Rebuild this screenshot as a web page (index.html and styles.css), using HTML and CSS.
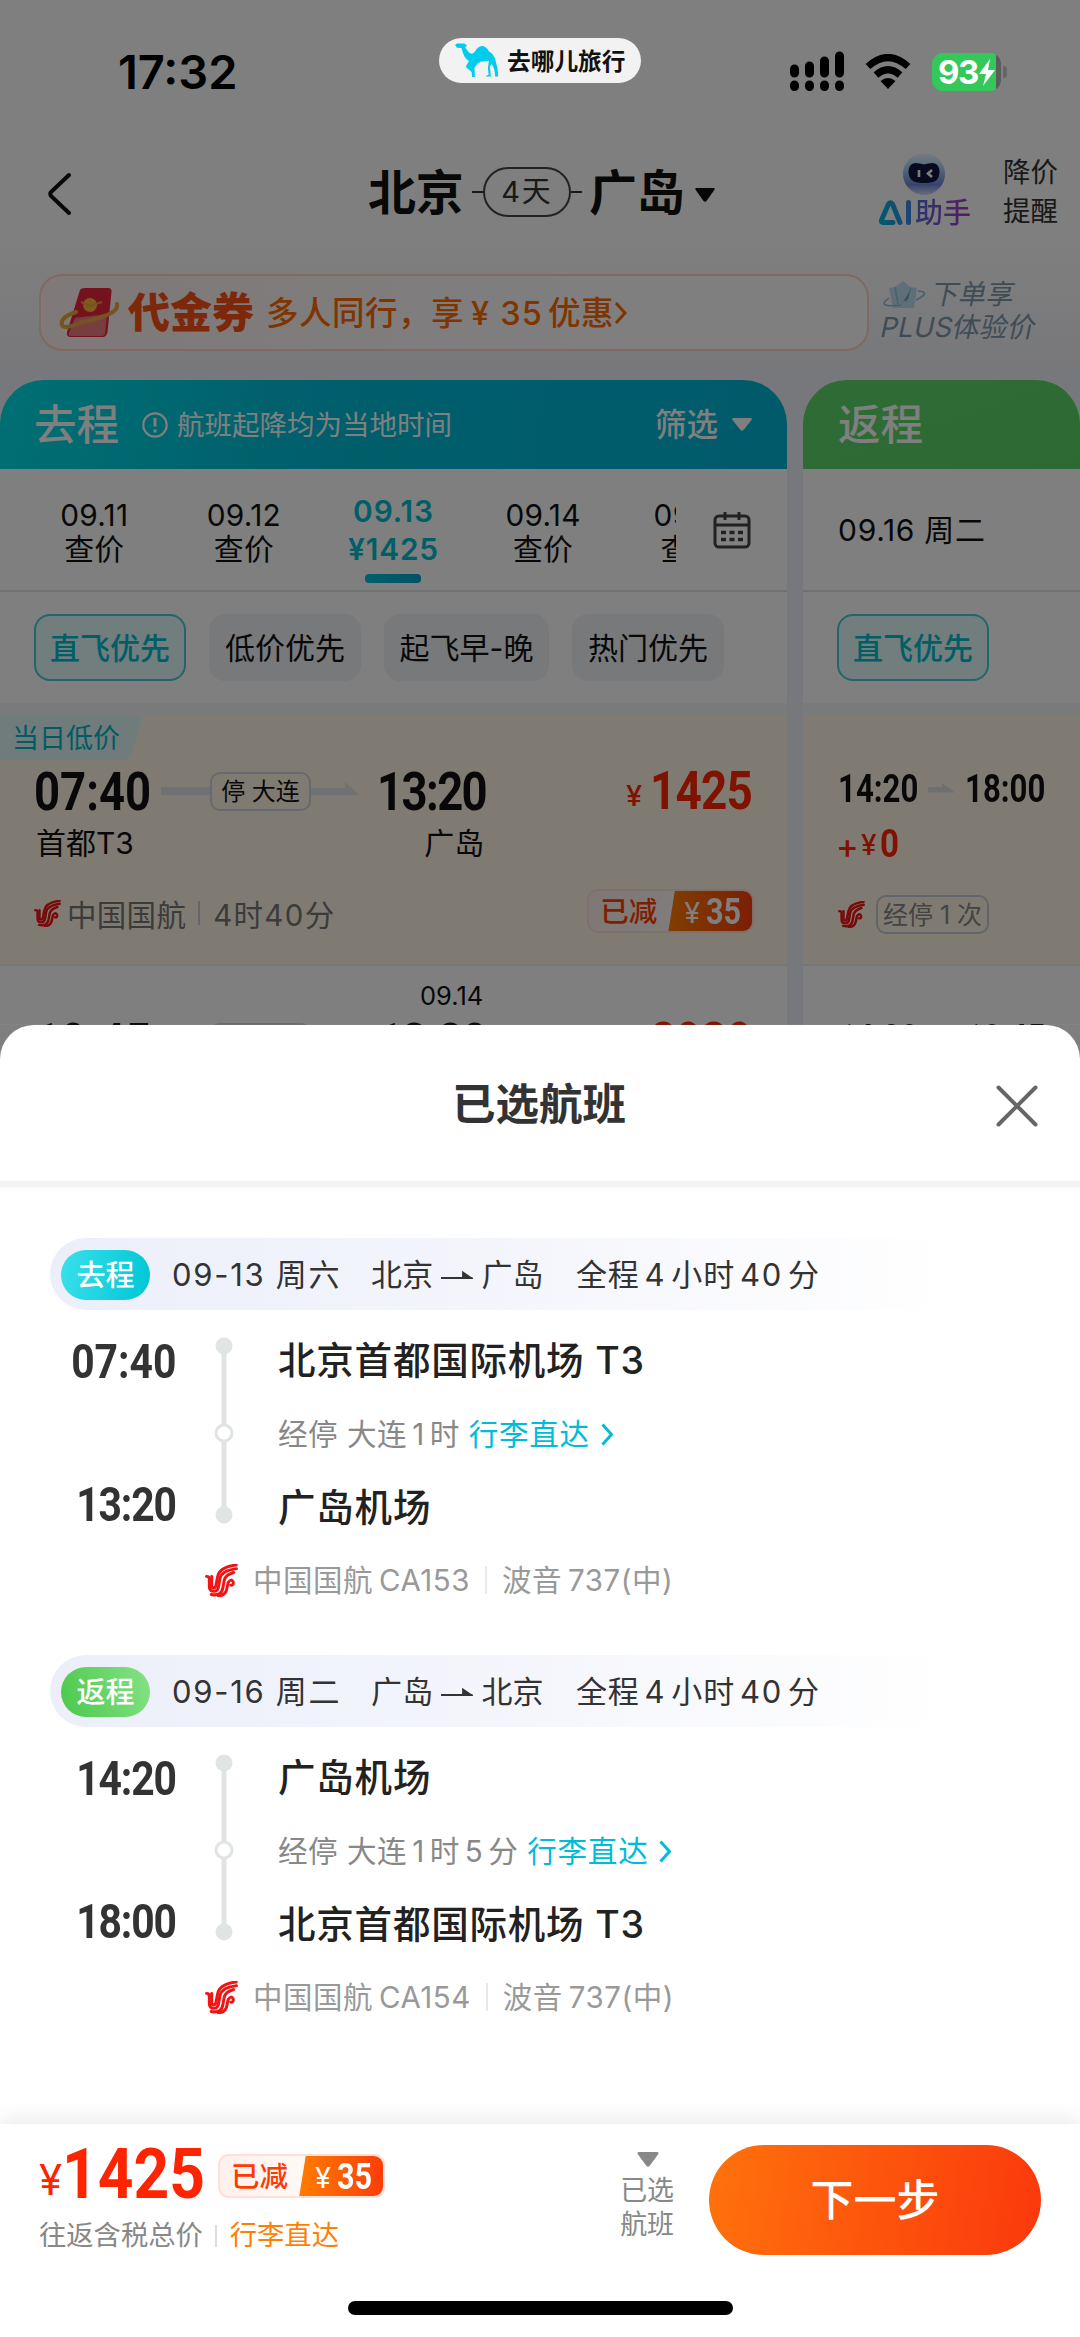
FILE: index.html
```html
<!DOCTYPE html>
<html lang="zh-CN">
<head>
<meta charset="utf-8">
<title>已选航班</title>
<link rel="stylesheet" href="styles.css">
</head>
<body>
<svg class="defs" width="0" height="0">
  <defs>
    <symbol id="airline" viewBox="0 0 32 32">
      <g fill="none" stroke-width="2.900" stroke-linecap="round">
        <path d="M1.500 12q3 0 2.700 3.500v6q0 5 4.500 5q3.800 0 4.500-5l1.300-7.500q1.600-7.500 16-9.500"/>
        <path d="M6.500 12v9q0 2 2 2.200q1.800 0 2.200-3l1.600-8q2-9.500 18-11.200"/>
        <path d="M6 29.500q9 2 11-5l1.700-9q1.500-5 9-7.200"/>
        <path d="M13 31q7-.6 8.200-7l1.200-6q3-4.500 5-.500q.4 3.500-2.400 3"/>
      </g>
    </symbol>
    <symbol id="camel" viewBox="0 0 44 34">
      <path d="M0 2L2 .5h7l3 1.800-1.800 2.200L14 9.500q3 2.500 5.500-.5q3.500-5.800 7.500-6q4 0 7 5.500q5 2.500 6.500 9q2.500 7 2.800 16h-3.200q0-8-3.600-13l-1.600 3.500 1 9.500h-5q0-1.300 2.800-1.700l-.8-6.500 1-7.500-8.500 1-3 2-3 4 .6 10.700h-5q0-1.200 2.200-1.500l-.6-5-5.200-4.600q-.7-1 0-2l2.600-4.500Q9 16 6.500 5L2 4.800z" fill="#00cdee"/>
    </symbol>
  </defs>
</svg>
<div class="screen">
  <div class="app">
    <header class="nav">
      <svg class="back" width="24" height="44" viewBox="0 0 24 44"><path d="M21 3L3 20q-1.500 2 0 4l18 17" fill="none" stroke="#111" stroke-width="4" stroke-linecap="round"/></svg>
      <div class="trip">
        <b>北京</b><i></i><span class="days">4天</span><i></i><b>广岛</b>
        <svg width="20" height="14" viewBox="0 0 20 14"><path d="M1.500 0h17q2 0 .8 2l-7.800 11q-1.500 1.500-3 0L.7 2Q-.5 0 1.500 0z" fill="#111"/></svg>
      </div>
      <div class="ai">
        <svg width="44" height="44" viewBox="0 0 44 44">
          <defs><linearGradient id="orb" x1="0" y1="0" x2="0" y2="1"><stop offset="0" stop-color="#f3f8ff"/><stop offset=".35" stop-color="#a9d2f5"/><stop offset=".75" stop-color="#6f87d8"/><stop offset="1" stop-color="#d5dcf8"/></linearGradient></defs>
          <circle cx="22" cy="22" r="21" fill="url(#orb)"/>
          <path d="M13 11q5 0 9 1.500q4-1.500 9-1.500q7 1 6.500 10q-1 9-9 9.500q-6 1-13 0q-8-1-9-9.500q-.5-9 6.500-10z" fill="#10173e"/>
          <path d="M17 18v7M30 18l-4 3.500 4 3.500" fill="none" stroke="#fff" stroke-width="2.600"/>
        </svg>
        <div class="ai-label">
          <svg width="33" height="26" viewBox="0 0 33 26"><defs><linearGradient id="aig" gradientUnits="userSpaceOnUse" x1="0" y1="0" x2="33" y2="0"><stop offset="0" stop-color="#00b5dc"/><stop offset="1" stop-color="#3f87e8"/></linearGradient></defs><path d="M14 22.500H3.500Q2 22 2.500 20L9.500 4q2-2.500 4 0l7.500 18.500M29.500 2.500v20" fill="none" stroke="url(#aig)" stroke-width="5" stroke-linecap="round"/></svg><span>助手</span>
        </div>
      </div>
      <div class="alert">降价<br>提醒</div>
    </header>

    <section class="promo">
      <div class="coupon">
        <svg width="64" height="50" viewBox="0 0 64 50"><path d="M22 2q1-2 5-2h23q4 0 3.500 4l-4 40q-1 5-5 5H13q-5 0-4-5z" fill="#e8243d"/><path d="M17 30l32-4-2 20q-1 2-3 2H13q-3 0-2-3z" fill="#ef7b83"/><path d="M18 24Q2 29 4 37q2 5 20-3 19-3 31-10 5-4 4-8" fill="none" stroke="#eba83e" stroke-width="4" stroke-linecap="round"/><circle cx="32" cy="17" r="7" fill="#f7b93d"/><path d="M23 14l9 4 12-4" fill="none" stroke="#f2a03a" stroke-width="2"/></svg>
        <b>代金券</b><span>多人同行，享<em>¥ 35</em>优惠</span>
        <svg width="13" height="24" viewBox="0 0 13 24"><path d="M2 2l9 10-9 10" fill="none" stroke="#ff6a00" stroke-width="3"/></svg>
      </div>
      <div class="plus">
        <div><svg width="46" height="30" viewBox="0 0 46 30"><path d="M8 8l6-1 8-6 7 6 7 1-3 20H12z" fill="#c0dfef"/><path d="M14 7l3 17M30 8l-5 14" fill="none" stroke="#8fc4e2" stroke-width="1.500"/><path d="M29 11l-7 11 5-3z" fill="#5ea3cf"/><path d="M8 18q-14 10 12 7M37 11q14 1-2 9" fill="none" stroke="#85bde0" stroke-width="1.500"/></svg><span>下单享</span></div>
        <div class="plus-second">PLUS体验价</div>
      </div>
    </section>

    <main class="columns">
      <section class="outbound">
        <div class="col-head">
          <strong>去程</strong>
          <svg width="26" height="26" viewBox="0 0 26 26"><circle cx="13" cy="13" r="11.700" fill="none" stroke="#fff" stroke-width="2.200"/><path d="M13 6v8.500M13 17.500v3" stroke="#fff" stroke-width="3"/></svg>
          <span class="note">航班起降均为当地时间</span>
          <span class="filter">筛选</span>
          <svg width="20" height="13" viewBox="0 0 20 13"><path d="M1.500 0h17q2 0 1 2l-8 10q-1.500 1.500-3 0l-8-10Q-.5 0 1.500 0z" fill="#fff"/></svg>
        </div>
        <div class="dates">
          <div class="days-strip">
            <div class="day">09.11<br>查价</div>
            <div class="day">09.12<br>查价</div>
            <div class="day on">09.13<br><span>¥1425</span><i></i></div>
            <div class="day">09.14<br>查价</div>
            <div class="day">09.15<br>查价</div>
          </div>
          <svg width="38" height="38" viewBox="0 0 38 38"><g fill="none" stroke="#444" stroke-width="3"><rect x="2" y="5" width="34" height="31" rx="4"/><path d="M2 14h34M12 1v8M26 1v8"/><path d="M8 21.500h22M8 28.500h22" stroke-dasharray="5 3.500" stroke-width="3.500"/></g></svg>
        </div>
        <div class="chips"><span class="chip on">直飞优先</span><span class="chip">低价优先</span><span class="chip wide">起飞早-晚</span><span class="chip">热门优先</span></div>
        <article class="flight">
          <div class="tag"><span>当日低价</span></div>
          <div class="times">
            <div class="slot"><b class="din">07:40</b></div>
            <div class="leg"><i class="bar"></i><span>停 大连</span><svg width="48" height="14" viewBox="0 0 48 14"><path d="M0 6h34V0l14 13H0z" fill="#dfe3e4"/></svg></div>
            <div class="slot second"><b class="din">13:20</b></div>
            <div class="price"><small>¥</small><b class="din">1425</b></div>
          </div>
          <div class="places"><span>首都T3</span><span>广岛</span></div>
          <div class="carrier">
            <svg class="air" width="27" height="27"><use href="#airline"/></svg><span>中国国航</span><i></i><span class="duration">4时40分</span>
            <div class="save"><span>已减</span><b><small>¥</small><em class="din">35</em></b></div>
          </div>
        </article>
        <article class="flight next">
          <div class="arrival-date">09.14</div>
          <div class="times">
            <div class="slot"><b class="din">10:45</b></div>
            <div class="leg"><i class="bar"></i><span>停 大连</span><svg width="48" height="14" viewBox="0 0 48 14"><path d="M0 6h34V0l14 13H0z" fill="#dfe3e4"/></svg></div>
            <div class="slot second"><b class="din">13:20</b></div>
            <div class="price"><small>¥</small><b class="din">2939</b></div>
          </div>
        </article>
      </section>

      <section class="inbound">
        <div class="col-head"><strong>返程</strong></div>
        <div class="dates">09.16 周二</div>
        <div class="chips"><span class="chip on">直飞优先</span></div>
        <article class="flight">
          <div class="in-times"><span><b class="din">14:20</b></span><svg width="27" height="10" viewBox="0 0 27 10"><path d="M0 4h14V0l13 9.500H0z" fill="#dadfe0"/></svg><span><b class="din">18:00</b></span></div>
          <div class="extra"><span>+</span><small>¥</small><b class="din">0</b></div>
          <div class="in-carrier"><svg class="air" width="27" height="27"><use href="#airline"/></svg><span>经停 1 次</span></div>
        </article>
        <article class="flight next">
          <div class="in-times"><span><b class="din">14:20</b></span><svg width="27" height="10"></svg><span><b class="din">10:45</b></span></div>
        </article>
      </section>
    </main>
  </div>
  <div class="mask"></div>

  <div class="status">
    <div class="clock">17:32</div>
    <div class="return-pill"><svg width="44" height="34"><use href="#camel"/></svg><span>去哪儿旅行</span></div>
    <svg class="signal" width="54" height="40" viewBox="0 0 54 40"><path d="M4.500 18v4M19.500 15v7M34.500 10v12M49.500 5v17M4.500 34v1.500M19.500 34v1.500M34.500 34v1.500M49.500 34v1.500" stroke="#000" stroke-width="9" stroke-linecap="round"/></svg>
    <svg class="wifi" width="46" height="35" viewBox="0 0 46 35"><path d="M3 12.500q20-18 40 0M11 21q12-10.500 24 0" fill="none" stroke="#000" stroke-width="7"/><path d="M23 35l-7.500-8q7.500-6 15 0z"/></svg>
    <div class="battery"><div class="cell">93<svg width="18" height="27" viewBox="0 0 18 27"><path d="M12 0L1 15h7L5 27 17 11h-7z" fill="#fff"/></svg></div><i></i></div>
  </div>

  <section class="sheet">
    <div class="sheet-title"><h1>已选航班</h1><svg width="42" height="42" viewBox="0 0 42 42"><path d="M2.500 2.500l37 37M39.500 2.500l-37 37" stroke="#666" stroke-width="4" stroke-linecap="round"/></svg></div>
    <div class="journeys">
      <article class="journey">
        <div class="summary"><b class="badge go">去程</b><span class="date">09-13 周六</span><span class="cities">北京<svg width="32" height="10" viewBox="0 0 32 10"><path d="M0 8h31.500M22 2.500l8 5.500h-8z" stroke="#333" stroke-width="1.800" fill="#333"/></svg>广岛</span><span class="total">全程<em>4</em>小时<em>40</em>分</span></div>
        <div class="detail">
          <div class="clock-col"><span><b class="din">07:40</b></span><span class="tight-one"><b class="din">13:20</b></span></div>
          <svg class="line" width="20" height="188" viewBox="0 0 20 188"><path d="M10 9v170" stroke="#e0e4e5" stroke-width="5"/><g fill="#e0e4e5"><circle cx="10" cy="9" r="8.500"/><circle cx="10" cy="178" r="8.500"/></g><circle cx="10" cy="96" r="8" fill="#fff" stroke="#e0e4e5" stroke-width="3"/></svg>
          <div class="stops"><b>北京首都国际机场 T3</b><p>经停 大连<em>1</em>时 <a>行李直达<svg width="12" height="23" viewBox="0 0 12 23"><path d="M1.500 1.500l9 10-9 10" fill="none" stroke="#00bcd8" stroke-width="3"/></svg></a></p><b>广岛机场</b></div>
        </div>
        <div class="plane"><svg class="air" width="33" height="33"><use href="#airline"/></svg><span>中国国航<em>CA153</em></span><i></i><span>波音<em>737(</em>中<em class="tight">)</em></span></div>
      </article>
      <article class="journey">
        <div class="summary"><b class="badge home">返程</b><span class="date">09-16 周二</span><span class="cities">广岛<svg width="32" height="10" viewBox="0 0 32 10"><path d="M0 8h31.500M22 2.500l8 5.500h-8z" stroke="#333" stroke-width="1.800" fill="#333"/></svg>北京</span><span class="total">全程<em>4</em>小时<em>40</em>分</span></div>
        <div class="detail">
          <div class="clock-col"><span class="tight-one"><b class="din">14:20</b></span><span class="tight-one"><b class="din">18:00</b></span></div>
          <svg class="line" width="20" height="188" viewBox="0 0 20 188"><path d="M10 9v170" stroke="#e0e4e5" stroke-width="5"/><g fill="#e0e4e5"><circle cx="10" cy="9" r="8.500"/><circle cx="10" cy="178" r="8.500"/></g><circle cx="10" cy="96" r="8" fill="#fff" stroke="#e0e4e5" stroke-width="3"/></svg>
          <div class="stops"><b>广岛机场</b><p>经停 大连<em>1</em>时<em>5</em>分 <a>行李直达<svg width="12" height="23" viewBox="0 0 12 23"><path d="M1.500 1.500l9 10-9 10" fill="none" stroke="#00bcd8" stroke-width="3"/></svg></a></p><b>北京首都国际机场 T3</b></div>
        </div>
        <div class="plane"><svg class="air" width="33" height="33"><use href="#airline"/></svg><span>中国国航<em>CA154</em></span><i></i><span>波音<em>737(</em>中<em class="tight">)</em></span></div>
      </article>
    </div>
    <footer class="footer">
      <div class="pay">
        <div class="sum">
          <div class="pay-sum">
            <div class="amount"><small>¥</small><b class="din">1425</b></div>
            <div class="save"><span>已减</span><b><small>¥</small><em class="din">35</em></b></div>
          </div>
          <div class="terms">往返含税总价<i></i><span>行李直达</span></div>
        </div>
        <div class="picked"><svg width="22" height="15" viewBox="0 0 22 15"><path d="M2 0h18q2.500 0 1 2.500L12.500 14q-1.500 1.500-3 0L1 2.500Q-.5 0 2 0z" fill="#888"/></svg>已选<br>航班</div>
        <button>下一步</button>
      </div>
      <div class="home-bar"></div>
    </footer>
  </section>
</div>
</body>
</html>
```
FILE: styles.css
```css
* { box-sizing: border-box; }
body { margin: 0; font-family: Inter, "Noto Sans CJK SC", sans-serif; color: #111; }
svg { display: block; flex: none; }
em { font-style: normal; }
h1, p { margin: 0; }
.defs { position: absolute; }
.screen { position: relative; width: 1080px; height: 2337px; overflow: hidden; display: flex; flex-direction: column; white-space: nowrap; background: #fff; }
.din { display: inline-block; font-family: Roboto, "Liberation Sans", sans-serif; font-weight: 700; transform: scaleX(.85); transform-origin: 0 50%; }
.air { stroke: #f01414; }

/* search results page */
.app { height: 1025px; flex: none; padding-top: 142px; background: linear-gradient(#fff 240px, #eff0f6 370px); }
.nav { height: 100px; display: grid; grid-template-columns: 319px 512px 112px auto; padding-left: 48px; align-items: center; }
.back { margin-top: 4px; }
.trip { display: flex; align-items: center; height: 50px; }
.trip b { font-size: 48px; line-height: 50px; width: 96px; letter-spacing: -.2px; padding-left: 1px; margin-top: 1px; }
.trip i { width: 11px; height: 2px; background: #333; }
.trip i:first-of-type { margin-left: 9px; }
.trip i:nth-of-type(2) { margin-right: 6px; }
.trip svg { margin: 6px 0 0 11px; }
.days { width: 88px; height: 50px; border: 2px solid #444; border-radius: 25px; font-size: 29px; line-height: 46px; text-align: center; color: #333; letter-spacing: 2px; }
.ai { height: 82px; }
.ai > svg { margin: 1px 0 -1px 23px; }
.ai-label { display: flex; align-items: center; height: 36px; font-size: 28px; line-height: 36px; font-weight: 500; gap: 3px; }
.ai-label span { background: linear-gradient(90deg, #5070dc, #b034cc); -webkit-background-clip: text; background-clip: text; color: transparent; }
.alert { font-size: 27.500px; line-height: 39px; color: #333; padding-left: 12px; }
.promo { display: flex; margin: 32px 0 0 39px; height: 77px; }
.coupon { width: 830px; border: 2px solid #ffd2c2; border-radius: 23px; background: linear-gradient(90deg, #fff2f2, #fff 70%); display: flex; align-items: center; padding-left: 17px; color: #ff6a00; }
.coupon b { font-size: 42px; line-height: 50px; margin: 1px 0 0 6px; color: #fa5014; width: 127px; font-weight: 900; }
.coupon span { font-size: 32.500px; line-height: 40px; letter-spacing: .5px; margin: 2px 0 0 11px; font-weight: 500; }
.coupon em { margin: 0 5px 0 7px; letter-spacing: 1.200px; }
.plus { padding: 4px 0 0 12px; font-size: 27.500px; line-height: 33px; color: #8098aa; }
.plus div { display: flex; align-items: center; }
.plus span { transform: skewX(-12deg); margin-left: 5px; }
.plus .plus-second { transform: skewX(-12deg); letter-spacing: .2px; }

.columns { display: flex; gap: 16px; margin-top: 29px; height: 645px; overflow: hidden; }
.outbound { width: 787px; background: #fff; border-radius: 44px 44px 0 0; overflow: hidden; flex: none; }
.inbound { width: 277px; background: #fff; border-radius: 44px 44px 0 0; overflow: hidden; }
.col-head { height: 89px; display: flex; align-items: center; padding-left: 34px; color: #fff; background: linear-gradient(100deg, #00dfe6, #00bed8 40%, #00b4d4); }
.col-head strong { font-size: 42.500px; font-weight: 500; width: 108px; line-height: 50px; }
.note { font-size: 27.500px; line-height: 36px; margin: 0 0 0 9px; width: 469px; }
.filter { font-size: 31.500px; line-height: 40px; font-weight: 500; margin: 0 0 0 9px; width: 77px; }
.inbound .col-head { background: linear-gradient(160deg, #60d86a, #5ad467); }
.inbound .col-head strong { padding-left: 1px; }
.dates { height: 123px; border-bottom: 2px solid #dfe2e8; display: flex; align-items: center; }
.days-strip { width: 676px; height: 121px; display: flex; padding-left: 19.500px; overflow: hidden; flex: none; }
.days-strip + svg { margin: 1px 0 0 37px; }
.day { width: 149.600px; flex: none; text-align: center; font-size: 29.800px; letter-spacing: .3px; line-height: 34px; padding-top: 29px; }
.day:last-child { padding-right: 4px; }
.day.on { color: #00bccd; font-weight: 600; padding-top: 23px; line-height: 38px; letter-spacing: .9px; }
.day i { display: block; width: 56px; height: 9px; border-radius: 4px; background: linear-gradient(90deg, #00c0d8, #00a4cd); margin: 6px auto 0; }
.inbound .dates { padding: 0 0 4px 35px; font-size: 30px; letter-spacing: .7px; }
.chips { height: 111px; display: flex; gap: 23px; padding: 22px 0 0 34px; }
.chip { width: 152px; height: 67px; border-radius: 16px; background: #f1f2f6; font-size: 30px; line-height: 69px; text-align: center; flex: none; }
.chip.wide { width: 165px; }
.chip.on { border: 2px solid #45cbd5; line-height: 65px; background: #e4fafb; color: #00bccd; font-weight: 500; }
.flight { height: 263px; border-top: 13px solid #f2f5f6; border-bottom: 2px solid #e9eaec; background: #fff7e6; }
.tag { width: 142px; height: 44px; background: #e0f8f9; clip-path: polygon(0 0, 100% 0, 94% 75%, 92% 90%, 88% 100%, 0 100%); font-size: 27px; line-height: 45px; color: #00b6c8; padding-left: 12px; }
.times { display: flex; align-items: center; height: 62px; padding-left: 34px; }
.slot { width: 127px; font-size: 53.500px; line-height: 62px; }
.leg { display: flex; align-items: center; width: 216px; }
.leg .bar { width: 49px; height: 8px; background: #dfe3e4; }
.leg span { width: 101px; height: 39px; border: 2px solid #ccd2de; border-radius: 10px; font-size: 24px; line-height: 35px; text-align: center; }
.leg svg { margin-top: -4px; }
.slot.second { width: 249px; letter-spacing: -1.900px; }
.price { color: #ff2400; display: flex; font-size: 54px; line-height: 62px; padding-top: 1px; }
.price small { font-size: 29px; width: 24px; padding-top: 9px; font-weight: 500; line-height: 54px; }
.price .din { letter-spacing: -1px; }
.places { display: flex; font-size: 30px; line-height: 40px; padding: 1px 0 0 36px; }
.places span { width: 388px; }
.places span + span { padding-left: 13px; }
.carrier { display: flex; align-items: center; height: 44px; margin-top: 28px; padding-left: 34px; color: #777; font-size: 29.500px; }
.carrier > span { margin-left: 6px; letter-spacing: .3px; }
.carrier > i { width: 2px; height: 24px; background: #ccc; margin-left: 12px; }
.carrier .duration { margin-left: 13px; letter-spacing: 1.300px; width: 374px; }
.carrier .save { margin-top: -5px; }
.save { width: 167px; height: 44px; display: flex; border: 2px solid #ffe0d8; border-radius: 11px; background: linear-gradient(90deg, #fff1ec, #fff); color: #ff3c00; font-size: 28.500px; line-height: 41px; font-weight: 500; overflow: hidden; flex: none; }
.save > span { width: 81px; padding-left: 11px; }
.save > b { width: 86px; margin: -2px; height: 44px; line-height: 47px; flex: none; color: #fff; background: linear-gradient(90deg, #ff7d00, #fa3c0a); clip-path: polygon(7px 0, 100% 0, 100% 100%, 0 100%); padding-left: 16px; display: flex; }
.save small { font-size: 29px; width: 22px; font-weight: 400; }
.save .din { font-size: 36px; }
.next { background: #fff; border-top: 0; }
.arrival-date { font-size: 25.500px; line-height: 30px; padding: 15px 0 0 420px; }
.next .times { margin-top: 0; }
.in-times { display: flex; align-items: center; padding-left: 35px; margin-top: 51px; height: 42px; font-size: 38px; line-height: 42px; }
.in-times .din { transform: scaleX(.82); }
.in-times span { width: 90px; }
.in-times svg { margin-right: 10px; }
.extra { display: flex; padding-left: 33px; margin-top: 14px; height: 42px; line-height: 45px; color: #ff2400; }
.extra span { font-size: 34px; width: 25px; font-weight: 500; }
.extra small { font-size: 28px; width: 19px; font-weight: 500; }
.extra .din { font-size: 39px; line-height: 43px; }
.in-carrier { display: flex; align-items: center; gap: 11px; padding-left: 35px; margin-top: 30px; }
.in-carrier span { width: 113px; height: 39px; border: 2px solid #c4cad6; border-radius: 10px; font-size: 25px; line-height: 36px; color: #888; text-align: center; }
.inbound .next .in-times { margin-top: 51px; }

.mask { position: absolute; inset: 0 0 auto 0; height: 1100px; background: rgba(0, 0, 0, .5); }

/* system status bar, shown over the mask */
.status { position: absolute; top: 38px; left: 118px; display: flex; height: 68px; }
.clock { font-size: 47px; line-height: 68px; font-weight: 600; width: 321px; color: #000; }
.return-pill { width: 202px; height: 45px; border-radius: 23px; background: #f2f2f2; display: flex; padding: 5px 0 0 16px; gap: 8px; font-size: 23.700px; line-height: 37px; font-weight: 700; color: #111; }
.signal { margin: 13px 0 0 149px; }
.wifi { margin: 16px 0 0 21px; }
.battery { display: flex; margin: 15px 0 0 21px; height: 38px; align-items: center; }
.cell { width: 69px; height: 38px; border-radius: 11px; background: linear-gradient(90deg, #34c759 64px, #5c5c5c 64px); color: #fff; font-size: 33px; font-weight: 700; line-height: 38px; display: flex; align-items: center; padding-left: 6px; letter-spacing: -1.500px; }
.battery i { width: 4px; height: 12px; margin-left: 2px; border-radius: 0 4px 4px 0; background: #666; }

/* selected flights sheet */
.sheet { position: relative; flex: 1; background: #fff; border-radius: 34px 34px 0 0; display: flex; flex-direction: column; }
.sheet-title { height: 162px; flex: none; display: grid; grid-template-columns: 1fr auto; align-items: center; border-bottom: 6px solid #f3f3f3; box-shadow: 0 3px 4px #fafafa; padding: 6px 42px 0 84px; }
.sheet-title h1 { font-size: 43.500px; line-height: 60px; font-weight: 700; text-align: center; color: #333; margin: -5px 2px 0 0; }
.journeys { flex: 1; padding: 51px 0 0 50px; }
.journey { height: 417px; }
.summary { height: 72px; width: 950px; border-radius: 36px 0 0 36px; background: linear-gradient(90deg, #eceffa, #f5f6fc 50%, #fff 95%); display: grid; grid-template-columns: 111px 199px 205px auto; padding: 1px 0 0 11px; align-items: center; font-size: 31px; line-height: 45px; color: #333; }
.badge { width: 89px; height: 50px; border-radius: 25px; color: #fff; font-size: 29px; font-weight: 500; line-height: 51px; text-align: center; }
.badge.go { background: linear-gradient(100deg, #3ae0ea, #00c6d6); }
.badge.home { background: linear-gradient(70deg, #4ac84c, #86e286); }
.date { letter-spacing: 1.700px; }
.cities { display: flex; align-items: center; gap: 8px; letter-spacing: .2px; }
.total { letter-spacing: .8px; }
.total em { margin: 0 5px; letter-spacing: 1.700px; }
.detail { display: grid; grid-template-columns: 164px 20px auto; height: 188px; margin-top: 27px; }
.clock-col { padding-right: 18px; width: 144px; padding-top: 1px; }
.clock-col span { display: flex; justify-content: flex-end; height: 50px; margin-top: -1px; font-size: 47.500px; line-height: 50px; color: #333; }
.clock-col span + span { margin-top: 93px; }
.clock-col .din { transform-origin: 100% 50%; transform: scaleX(.86); }
.clock-col .tight-one { letter-spacing: -1.300px; }
.stops { padding-left: 44px; display: grid; grid-template-rows: 48px 98px 49px; align-items: center; height: 195px; }
.stops b { font-size: 37.500px; line-height: 46px; font-weight: 500; letter-spacing: .8px; color: #222; }
.stops p { font-size: 29.600px; line-height: 40px; letter-spacing: .5px; color: #888; white-space: pre; }
.stops em { margin: 0 5px; }
.stops a { color: #00bcd8; letter-spacing: .7px; }
.stops a svg { display: inline-block; margin: 0 0 -1px 11px; }
.plane { display: flex; align-items: center; margin: 35px 0 0 155px; height: 40px; font-size: 29.500px; line-height: 41px; letter-spacing: .5px; color: #999; }
.plane span { margin-left: 15px; }
.plane em { margin-left: 6px; }
.plane .tight { margin: 0; }
.plane i { width: 2px; height: 28px; background: #e8e8e8; margin-left: 15px; }
.footer { height: 213px; flex: none; background: #fff; position: relative; box-shadow: 0 -4px 20px rgba(0, 0, 0, .09); padding: 21px 39px 0; }
.pay { display: flex; height: 156px; }
.sum { width: 582px; padding-top: 1px; }
.pay-sum { display: flex; height: 62px; align-items: center; }
.pay-sum .save { margin-top: -2px; }
.amount { width: 179px; display: flex; color: #ff2400; font-size: 70px; line-height: 67px; }
.amount small { font-size: 42px; width: 31px; padding-top: 5px; }
.amount .din { transform: scaleX(.89); }
.terms { display: flex; align-items: center; font-size: 27.300px; line-height: 40px; color: #888; margin-top: 8px; }
.terms i { width: 2px; height: 22px; background: #ddd; margin: 0 13px 0 12px; }
.terms span { color: #ff8000; }
.picked { width: 89px; padding-top: 7px; color: #888; font-size: 27px; line-height: 34px; }
.picked svg { margin: 0 0 7px 17px; }
.pay button { width: 332px; height: 110px; border: 0; border-radius: 55px; background: linear-gradient(100deg, #ff720c, #fb380c); color: #fff; font: 500 43px/110px Inter, "Noto Sans CJK SC", sans-serif; padding: 0; flex: none; }
.home-bar { width: 385px; height: 14px; border-radius: 7px; background: #000; margin-left: 309px; }
```
